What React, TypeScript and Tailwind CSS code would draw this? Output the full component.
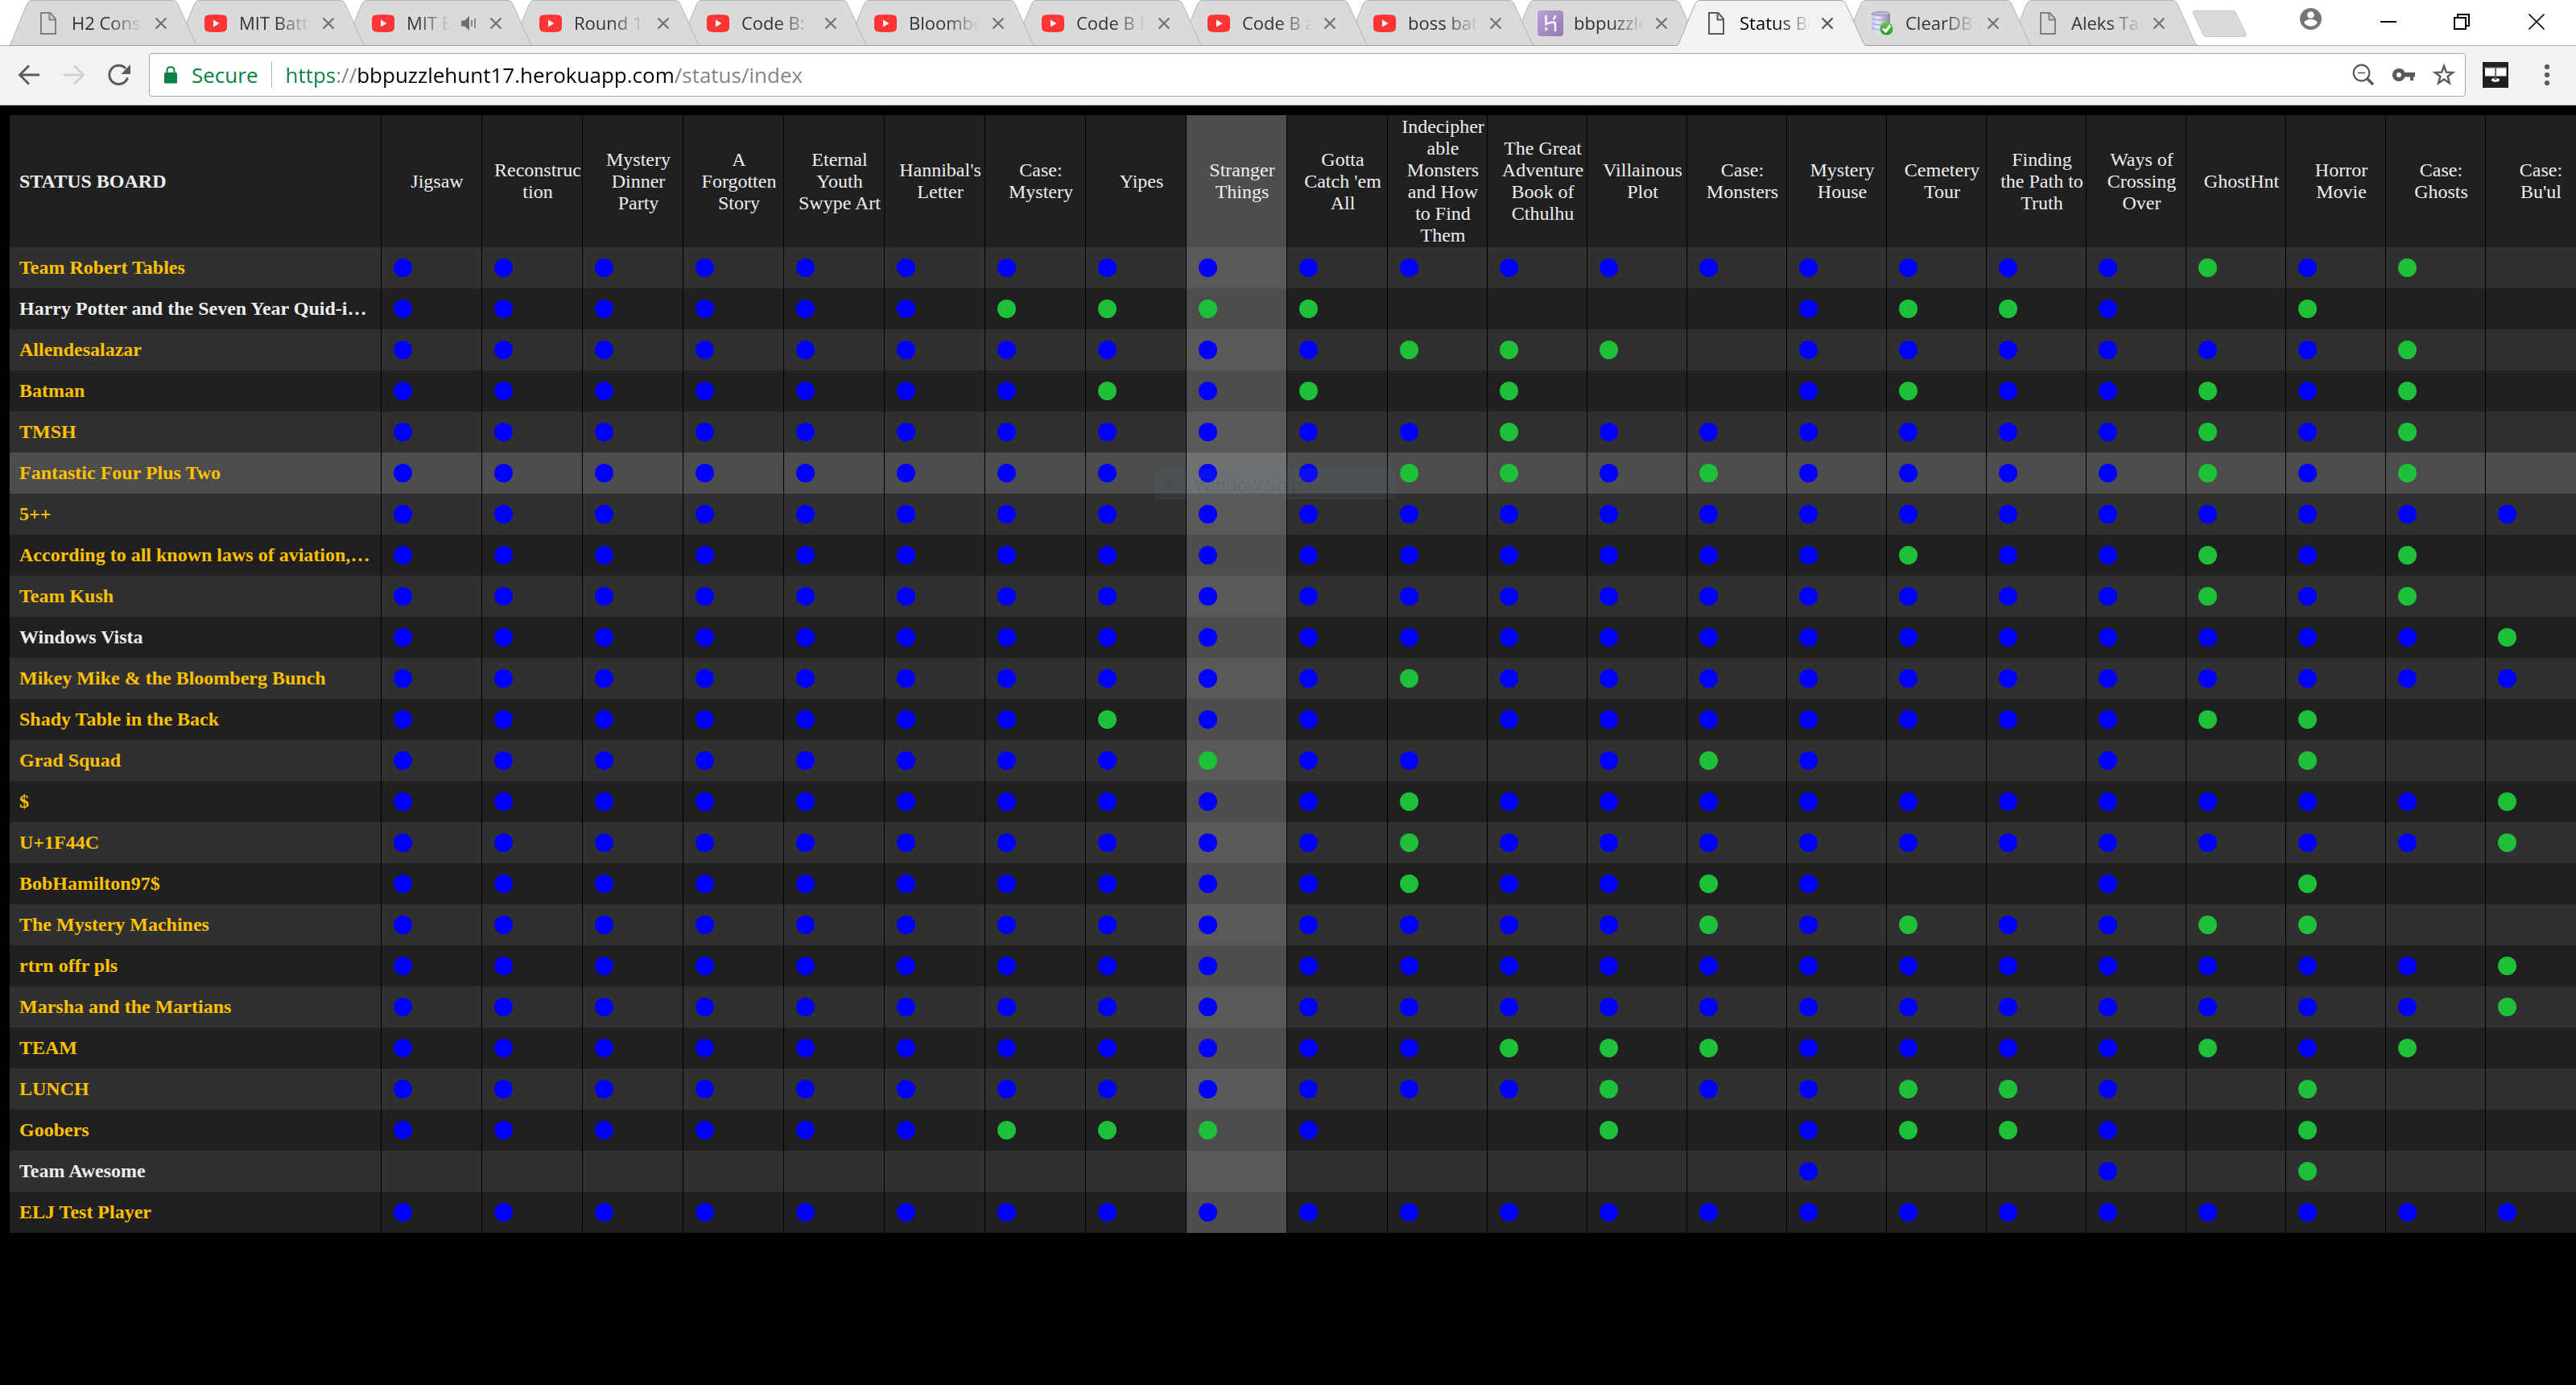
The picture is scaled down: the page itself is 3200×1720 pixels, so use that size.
import React from "react";

type TabKind = "page" | "video" | "heroku" | "db";
type Tab = { title: string; kind: TabKind; active?: boolean; audio?: boolean };

const tabs: Tab[] = [
  { title: "H2 Console", kind: "page" },
  { title: "MIT Battlecode", kind: "video" },
  { title: "MIT Battle", kind: "video", audio: true },
  { title: "Round 1 of", kind: "video" },
  { title: "Code B: The", kind: "video" },
  { title: "Bloomberg", kind: "video" },
  { title: "Code B Finals", kind: "video" },
  { title: "Code B at the", kind: "video" },
  { title: "boss battle", kind: "video" },
  { title: "bbpuzzlehunt", kind: "heroku" },
  { title: "Status Board", kind: "page", active: true },
  { title: "ClearDB My", kind: "db" },
  { title: "Aleks Tamas", kind: "page" },
];

const puzzles = [
  "Jigsaw",
  "Reconstruction",
  "Mystery Dinner Party",
  "A Forgotten Story",
  "Eternal Youth Swype Art",
  "Hannibal's Letter",
  "Case: Mystery",
  "Yipes",
  "Stranger Things",
  "Gotta Catch 'em All",
  "Indecipherable Monsters and How to Find Them",
  "The Great Adventure Book of Cthulhu",
  "Villainous Plot",
  "Case: Monsters",
  "Mystery House",
  "Cemetery Tour",
  "Finding the Path to Truth",
  "Ways of Crossing Over",
  "GhostHnt",
  "Horror Movie",
  "Case: Ghosts",
  "Case: Bu'ul",
];

const HOVER_COLUMN = 8;
const HOVER_ROW = 5;

// One letter per puzzle: B = solved, G = open, . = locked
const teams: { name: string; cells: string; plain?: boolean }[] = [
  { name: "Team Robert Tables", cells: "BBBBBBBBBBBBBBBBBBGBG." },
  { name: "Harry Potter and the Seven Year Quid-itching", cells: "BBBBBBGGGG....BGGB.G..", plain: true },
  { name: "Allendesalazar", cells: "BBBBBBBBBBGGG.BBBBBBG." },
  { name: "Batman", cells: "BBBBBBBGBG.G..BGBBGBG." },
  { name: "TMSH", cells: "BBBBBBBBBBBGBBBBBBGBG." },
  { name: "Fantastic Four Plus Two", cells: "BBBBBBBBBBGGBGBBBBGBG." },
  { name: "5++", cells: "BBBBBBBBBBBBBBBBBBBBBB" },
  { name: "According to all known laws of aviation, there is no way", cells: "BBBBBBBBBBBBBBBGBBGBG." },
  { name: "Team Kush", cells: "BBBBBBBBBBBBBBBBBBGBG." },
  { name: "Windows Vista", cells: "BBBBBBBBBBBBBBBBBBBBBG", plain: true },
  { name: "Mikey Mike & the Bloomberg Bunch", cells: "BBBBBBBBBBGBBBBBBBBBBB" },
  { name: "Shady Table in the Back", cells: "BBBBBBBGBB.BBBBBBBGG.." },
  { name: "Grad Squad", cells: "BBBBBBBBGBB.BGB..B.G.." },
  { name: "$", cells: "BBBBBBBBBBGBBBBBBBBBBG" },
  { name: "U+1F44C", cells: "BBBBBBBBBBGBBBBBBBBBBG" },
  { name: "BobHamilton97$", cells: "BBBBBBBBBBGBBGB..B.G.." },
  { name: "The Mystery Machines", cells: "BBBBBBBBBBBBBGBGBBGG.." },
  { name: "rtrn offr pls", cells: "BBBBBBBBBBBBBBBBBBBBBG" },
  { name: "Marsha and the Martians", cells: "BBBBBBBBBBBBBBBBBBBBBG" },
  { name: "TEAM", cells: "BBBBBBBBBBBGGGBBBBGBG." },
  { name: "LUNCH", cells: "BBBBBBBBBBBBGBBGGB.G.." },
  { name: "Goobers", cells: "BBBBBBGGGB..G.BGGB.G.." },
  { name: "Team Awesome", cells: "..............B..B.G..", plain: true },
  { name: "ELJ Test Player", cells: "BBBBBBBBBBBBBBBBBBBBBB" },
];

function PageIcon({ color }: { color: string }) {
  return (
    <svg width="20" height="28" viewBox="0 0 20 28" fill="none" stroke={color} strokeWidth="2">
      <path d="M1 1H12.5L19 8.5V27H1Z" />
      <path d="M11.5 1V9.5H19" />
    </svg>
  );
}

function VideoIcon() {
  return (
    <svg width="28" height="22" viewBox="0 0 28 22">
      <path d="M5 .6Q14 -.4 23 .6Q28 1 28 6V16Q28 21 23 21.4Q14 22.4 5 21.4Q0 21 0 16V6Q0 1 5 .6Z" fill="#ff3434" />
      <path d="M11 6.5L18.5 11L11 15.5Z" fill="#fff" />
    </svg>
  );
}

function HerokuIcon() {
  return (
    <svg width="32" height="32" viewBox="0 0 32 32">
      <defs>
        <linearGradient id="heroku" x1="0" y1="0" x2="1" y2="1">
          <stop offset="0" stopColor="#b9a3d6" />
          <stop offset="1" stopColor="#9377b4" />
        </linearGradient>
      </defs>
      <rect width="32" height="32" rx="4" fill="url(#heroku)" />
      <path d="M10.5 6V17Q16 14.500 19.500 14.500Q22 14.500 22 17.500V26" fill="none" stroke="#fff" strokeWidth="2.400" />
      <path d="M22 6Q22 9 19.500 11" fill="none" stroke="#fff" strokeWidth="2.400" />
      <path d="M9.500 20L13 23L9.500 26Z" fill="#fff" />
    </svg>
  );
}

function DbIcon() {
  return (
    <svg width="30" height="30" viewBox="0 0 30 30">
      <defs>
        <linearGradient id="disk" x1="0" x2="1">
          <stop offset="0" stopColor="#c9c9ec" />
          <stop offset=".35" stopColor="#e4e4fa" />
          <stop offset="1" stopColor="#85859f" />
        </linearGradient>
        <linearGradient id="tick" x1="0" y1="0" x2="0" y2="1">
          <stop offset="0" stopColor="#6cc94f" />
          <stop offset="1" stopColor="#1f9a28" />
        </linearGradient>
      </defs>
      <path d="M2 3V25Q2 28 14 28Q25 28 25 25V3Z" fill="url(#disk)" />
      <ellipse cx="13.500" cy="3" rx="11.500" ry="2.600" fill="#b4b4dc" stroke="#8d8db4" strokeWidth=".8" />
      <path d="M2 9Q13 13 25 9M2 15Q13 19 25 15M2 21Q10 24 16 23" fill="none" stroke="#9a9ac4" />
      <circle cx="20.500" cy="21.500" r="8" fill="url(#tick)" />
      <path d="M16 21.500L19.500 25L25 17.500" fill="none" stroke="#fff" strokeWidth="3" />
    </svg>
  );
}

function TabIcon({ tab }: { tab: Tab }) {
  if (tab.kind === "video") return <VideoIcon />;
  if (tab.kind === "heroku") return <HerokuIcon />;
  if (tab.kind === "db") return <DbIcon />;
  return <PageIcon color={tab.active ? "#5a5a5a" : "#808080"} />;
}

function BrowserTab({ tab, index }: { tab: Tab; index: number }) {
  return (
    <div
      className={`relative h-[57px] shrink-0 ${index < 6 ? "w-[208px]" : "w-[206px]"}`}
      style={{ zIndex: tab.active ? 30 : 20 - index }}
    >
      <svg className="absolute top-0 left-0" width="236" height="57" viewBox="0 0 236 57">
        <path
          d="M0 57Q1.500 56 2.500 54L22 6Q24.500 .5 28 .5H204Q208 .5 210 5L231.500 53Q233 56 235 57Z"
          fill={tab.active ? "#f2f2f2" : "#dadada"}
        />
        <path
          d="M0 56.500Q1.500 56 2.500 54L22 6Q24.500 .5 28 .5H204Q208 .5 210 5L231.500 53Q233 56 235 56.500"
          fill="none"
          stroke={tab.active ? "#a6a6a6" : "#b4b4b4"}
        />
        {!tab.active && <path d="M0 56.500H236" stroke="#9c9c9c" />}
      </svg>
      <div className="relative flex h-full items-center pl-[33px]">
        <span className="flex w-8 shrink-0 justify-center">
          <TabIcon tab={tab} />
        </span>
        <a
          href="#tab"
          className={`ml-[13px] overflow-hidden pb-px text-[22px] leading-8 whitespace-nowrap [mask-image:linear-gradient(to_right,black_calc(100%_-_42px),transparent)] ${
            tab.audio ? "w-[56px]" : "w-[88px]"
          } ${tab.active ? "text-black" : "text-[#333]"}`}
        >
          {tab.title}
        </a>
        {tab.audio && (
          <svg className="mr-2 ml-3 shrink-0" width="20" height="20" viewBox="0 0 20 20">
            <path d="M1 6.500H5L11 1V19L5 13.500H1Z" fill="#6e6e6e" />
            <path d="M14 6V14M18 4V16" stroke="#6e6e6e" strokeWidth="1.500" />
          </svg>
        )}
        <button aria-label={`Close ${tab.title}`} className="mr-[3px] ml-auto w-8 shrink-0">
          <svg className="ml-2" width="16" height="16" viewBox="0 0 16 16" stroke={tab.active ? "#5a5a5a" : "#757575"} strokeWidth="2.400">
            <path d="M1.500 1.500L14.500 14.500M14.500 1.500L1.500 14.500" />
          </svg>
        </button>
      </div>
    </div>
  );
}

function TabStrip() {
  return (
    <div className="flex h-[57px] border-b border-[#b0b0b0] bg-white">
      <div className="flex h-[57px] pl-[11px]">
        {tabs.map((tab, i) => (
          <BrowserTab key={i} tab={tab} index={i} />
        ))}
      </div>
      <button aria-label="New tab" className="ml-[22px] h-14 w-[68px] shrink-0">
        <svg className="mt-1" width="68" height="34" viewBox="0 0 68 34">
          <path d="M3 .5H51Q53.500 .5 54.500 3L67 29Q68 32.500 65 32.500H18Q15 32.500 14 30L1.500 4Q.5 .5 3 .5Z" fill="#dadada" stroke="#c4c4c4" />
        </svg>
      </button>
      <div className="ml-auto flex h-[54px] items-center pr-[39px]">
        <button aria-label="Profile" className="mr-[73px] pb-2">
          <svg width="27" height="27" viewBox="0 0 27 27">
            <circle cx="13.500" cy="13.500" r="13.500" fill="#757575" />
            <circle cx="13.500" cy="8.500" r="4.300" fill="#fff" />
            <path d="M5.500 18.500C5.500 12.500 21.500 12.500 21.500 18.500C19 24 8 24 5.500 18.500Z" fill="#fff" />
          </svg>
        </button>
        <button aria-label="Minimize" className="mr-[71px]">
          <svg width="20" height="20" viewBox="0 0 20 20">
            <path d="M0 10H20" stroke="#000" strokeWidth="2" />
          </svg>
        </button>
        <button aria-label="Restore" className="mr-[73px]">
          <svg width="20" height="20" viewBox="0 0 20 20" fill="none" stroke="#000" strokeWidth="2">
            <path d="M1 5H15V19H1ZM5 5V1H19V15H15" />
          </svg>
        </button>
        <button aria-label="Close window">
          <svg width="20" height="20" viewBox="0 0 20 20">
            <path d="M.5 .5L19.500 19.500M19.500 .5L.5 19.500" stroke="#111" strokeWidth="1.600" />
          </svg>
        </button>
      </div>
    </div>
  );
}

function Toolbar() {
  return (
    <div className="flex items-center border-b border-[#b5b5b5] bg-[#f2f2f2] pt-[9px] pr-8 pb-[10px] pl-[22px]">
      <button aria-label="Back">
        <svg width="28" height="26" viewBox="0 0 28 26" fill="none" stroke="#5a5a5a" strokeWidth="2.800">
          <path d="M27 13H3M14 1.500L2.500 13L14 24.500" />
        </svg>
      </button>
      <button aria-label="Forward" className="ml-7">
        <svg width="28" height="26" viewBox="0 0 28 26" fill="none" stroke="#d2d2d2" strokeWidth="2.800">
          <path d="M1 13H25M14 1.500L25.500 13L14 24.500" />
        </svg>
      </button>
      <button aria-label="Reload" className="ml-7">
        <svg width="28" height="28" viewBox="0 0 28 28">
          <path d="M24.500 17.500A11.600 11.600 0 1 1 22 6" fill="none" stroke="#5a5a5a" strokeWidth="2.900" />
          <path d="M28 1V13H16.500Z" fill="#5a5a5a" />
        </svg>
      </button>
      <div className="ml-[23px] flex h-[54px] flex-1 items-center rounded border border-[#a9a9a9] bg-white pr-3 pl-[18px]">
        <svg width="16" height="22" viewBox="0 0 16 22">
          <path d="M3.500 9V5.500Q3.500 1.200 8 1.200Q12.500 1.200 12.500 5.500V9" fill="none" stroke="#0b8043" strokeWidth="2" />
          <rect y="8" width="16" height="13.500" rx="1.500" fill="#0b8043" />
        </svg>
        <span className="ml-[18px] text-[26px] leading-9 text-[#0b8043]">Secure</span>
        <span className="ml-[17px] h-8 w-px bg-[#b5b5b5]" />
        <input
          aria-label="Address"
          spellCheck={false}
          defaultValue="https://bbpuzzlehunt17.herokuapp.com/status/index"
          className="ml-4 h-9 min-w-0 flex-1 bg-[linear-gradient(to_right,#0b8043_63px,#808080_63px,#808080_89px,#000_89px,#000_484px,#808080_484px)] bg-clip-text text-[26px] text-transparent outline-none"
        />
        <div className="flex items-center gap-[22px]">
          <button aria-label="Zoom out">
            <svg width="28" height="28" viewBox="0 0 28 28" fill="none" stroke="#5a5a5a">
              <circle cx="11.500" cy="11.500" r="9.800" strokeWidth="2.200" />
              <path d="M7 11.500H16" strokeWidth="1.600" />
              <path d="M18.500 18.500L26 26" strokeWidth="3.600" />
            </svg>
          </button>
          <button aria-label="Saved passwords">
            <svg width="28" height="18" viewBox="0 0 28 18">
              <path d="M8 1A8 8 0 1 0 15.500 11.500H22V16H26V11.500H28V6H15.500A8 8 0 0 0 8 1ZM8 6A3 3 0 1 1 8 12A3 3 0 1 1 8 6Z" fill="#5a5a5a" fillRule="evenodd" />
            </svg>
          </button>
          <button aria-label="Bookmark">
            <svg width="28" height="28" viewBox="0 0 28 28">
              <path d="M14 3L16.800 10.700L25 11L18.600 16L20.900 24.200L14 19.500L7.100 24.200L9.400 16L3 11L11.200 10.700Z" fill="none" stroke="#5a5a5a" strokeWidth="2.400" />
            </svg>
          </button>
        </div>
      </div>
      <button aria-label="Extension" className="ml-[21px]">
        <svg width="32" height="32" viewBox="0 0 32 32">
          <rect width="32" height="32" fill="#231f20" />
          <path d="M3 7.500H15.500V17.500H3ZM17 7.500H29.500V17.500H17Z" fill="#fff" />
          <path d="M2 7H30" stroke="#999" />
          <path d="M16 7V20" stroke="#888" />
          <ellipse cx="16" cy="22.300" rx="5" ry="2.400" fill="#fff" />
          <path d="M13.500 20.500H18.500L16 22.500Z" fill="#231f20" />
        </svg>
      </button>
      <button aria-label="Menu" className="ml-[44px]">
        <svg width="8" height="28" viewBox="0 0 8 28" fill="#5a5a5a">
          <circle cx="4" cy="4" r="3.100" />
          <circle cx="4" cy="14" r="3.100" />
          <circle cx="4" cy="24" r="3.100" />
        </svg>
      </button>
    </div>
  );
}

function cellColor(dark: boolean, row: boolean, column: boolean) {
  if (row && column) return "bg-[#717171]";
  if (row) return "bg-[#4d4d4d]";
  if (column) return dark ? "bg-[#4d4d4d]" : "bg-[#595959]";
  return dark ? "bg-[#202020]" : "bg-[#303030]";
}

function StatusBoard() {
  return (
    <div className="relative pt-3 pl-3">
      <table className="w-full table-fixed border-separate border-spacing-0 text-2xl leading-[27px] text-[#eee]">
        <colgroup>
          <col className="w-[462px]" />
          {puzzles.map((p, i) => (
            <col key={p} className={i < 10 ? "w-[125px]" : "w-[124px]"} />
          ))}
        </colgroup>
        <thead>
          <tr>
            <th scope="col" className="h-[164px] border-r border-black bg-[#202020] px-3 text-left font-bold">
              STATUS BOARD
            </th>
            {puzzles.map((p, i) => (
              <th
                key={p}
                scope="col"
                className={`border-r border-black py-px pl-[14px] text-center font-normal break-words ${cellColor(true, false, i === HOVER_COLUMN)}`}
              >
                {p}
              </th>
            ))}
          </tr>
        </thead>
        <tbody>
          {teams.map((team, r) => (
            <tr key={team.name}>
              <th
                scope="row"
                className={`h-[51px] truncate border-r border-black px-3 text-left font-bold ${team.plain ? "text-[#eee]" : "text-[#ffc000]"} ${cellColor(r % 2 === 1, r === HOVER_ROW, false)}`}
              >
                {team.name}
              </th>
              {team.cells.split("").map((c, i) => (
                <td
                  key={i}
                  className={`border-r border-black pl-[15px] ${cellColor(r % 2 === 1, r === HOVER_ROW, i === HOVER_COLUMN)}`}
                >
                  {c !== "." && (
                    <span className={`block size-[23px] rounded-full ${c === "B" ? "bg-[#0000ff]" : "bg-[#1fc039]"}`} />
                  )}
                </td>
              ))}
            </tr>
          ))}
        </tbody>
      </table>
      <div className="absolute top-[451px] left-[1434px] flex h-[38px] w-[300px] items-center bg-[#5a7896]/10 pl-[13px] font-['Open_Sans',sans-serif]">
        <span className="size-3 rounded-full bg-black/5" />
        <span className="ml-[25px] text-[22px] leading-8 text-black/10">Window Snip</span>
      </div>
    </div>
  );
}

export default function App() {
  return (
    <div className="min-h-screen overflow-hidden bg-black">
      <header className="font-['Open_Sans','Noto_Sans',sans-serif]">
        <TabStrip />
        <Toolbar />
      </header>
      <main className="font-['Liberation_Serif','Times_New_Roman',serif]">
        <StatusBoard />
      </main>
    </div>
  );
}
